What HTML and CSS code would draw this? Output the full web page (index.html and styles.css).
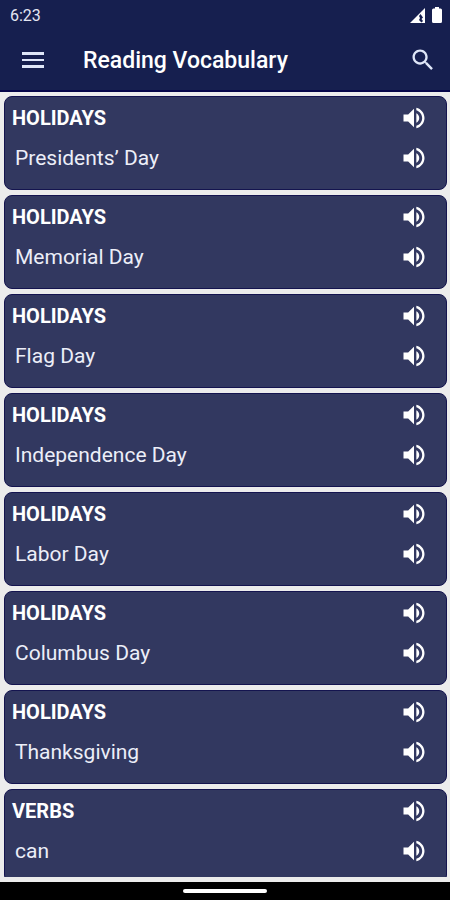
FILE: index.html
```html
<!DOCTYPE html>
<html lang="en">
<head>
    <meta charset="UTF-8">
    <meta name="viewport" content="width=device-width, initial-scale=1.0">
    <title>Reading Vocabulary</title>
    <link rel="stylesheet" href="styles.css">
</head>
<body>
    <!-- Shared icon shapes -->
    <svg class="icon-defs" aria-hidden="true">
        <symbol id="icon-volume" viewBox="0 0 24 24">
            <path d="M3 9v6h4l5 5V4L7 9H3zm13.5 3c0-1.77-1.02-3.29-2.5-4.03v8.05c1.48-.73 2.5-2.25 2.5-4.02zM14 3.23v2.06c2.89.86 5 3.54 5 6.71s-2.11 5.85-5 6.71v2.06c4.01-.91 7-4.49 7-8.77s-2.99-7.86-7-8.77z"/>
        </symbol>
    </svg>

    <div class="app">
        <header class="header">
            <div class="status-bar">
                <span class="clock">6:23</span>
                <div class="status-icons">
                    <svg class="signal" viewBox="0 0 15 15" aria-hidden="true">
                        <path d="M0 15L15 0v15z"/>
                        <path class="signal-mark" d="M10.500 6L13 9.500 11.500 11l1.500 2-1.500 1.500L9 12l1-2-1-2z"/>
                    </svg>
                    <svg class="battery" viewBox="0 0 10 16" aria-hidden="true">
                        <path d="M3 0h4v1.500h1.500Q10 1.500 10 3v11.500Q10 16 8.500 16h-7Q0 16 0 14.500V3Q0 1.500 1.500 1.500H3z"/>
                    </svg>
                </div>
            </div>
            <div class="toolbar">
                <button class="icon-button" type="button" aria-label="Menu">
                    <svg class="menu-icon" viewBox="0 0 22 16" aria-hidden="true">
                        <path d="M0 0h22v3H0zM0 7h22v2H0zM0 13h22v3H0z"/>
                    </svg>
                </button>
                <h1>Reading Vocabulary</h1>
                <button class="icon-button" type="button" aria-label="Search">
                    <svg class="search-icon" viewBox="0 0 24 24" aria-hidden="true">
                        <path d="M15.500 14h-.79l-.28-.27C15.410 12.590 16 11.110 16 9.500 16 5.910 13.090 3 9.500 3S3 5.910 3 9.500 5.910 16 9.500 16c1.610 0 3.090-.59 4.230-1.570l.27.28v.79l5 4.990L20.490 19l-4.990-5zm-6 0C7.010 14 5 11.990 5 9.500S7.010 5 9.500 5 14 7.010 14 9.500 11.990 14 9.500 14z"/>
                    </svg>
                </button>
            </div>
        </header>

        <main class="content">
            <ul class="word-list">
                <li class="word-card">
                    <div class="word-row">
                        <h2>HOLIDAYS</h2>
                        <button class="speak" type="button" aria-label="Play category"><svg><use href="#icon-volume"/></svg></button>
                    </div>
                    <div class="word-row">
                        <p>Presidents’ Day</p>
                        <button class="speak" type="button" aria-label="Play word"><svg><use href="#icon-volume"/></svg></button>
                    </div>
                </li>
                <li class="word-card">
                    <div class="word-row">
                        <h2>HOLIDAYS</h2>
                        <button class="speak" type="button" aria-label="Play category"><svg><use href="#icon-volume"/></svg></button>
                    </div>
                    <div class="word-row">
                        <p>Memorial Day</p>
                        <button class="speak" type="button" aria-label="Play word"><svg><use href="#icon-volume"/></svg></button>
                    </div>
                </li>
                <li class="word-card">
                    <div class="word-row">
                        <h2>HOLIDAYS</h2>
                        <button class="speak" type="button" aria-label="Play category"><svg><use href="#icon-volume"/></svg></button>
                    </div>
                    <div class="word-row">
                        <p>Flag Day</p>
                        <button class="speak" type="button" aria-label="Play word"><svg><use href="#icon-volume"/></svg></button>
                    </div>
                </li>
                <li class="word-card">
                    <div class="word-row">
                        <h2>HOLIDAYS</h2>
                        <button class="speak" type="button" aria-label="Play category"><svg><use href="#icon-volume"/></svg></button>
                    </div>
                    <div class="word-row">
                        <p>Independence Day</p>
                        <button class="speak" type="button" aria-label="Play word"><svg><use href="#icon-volume"/></svg></button>
                    </div>
                </li>
                <li class="word-card">
                    <div class="word-row">
                        <h2>HOLIDAYS</h2>
                        <button class="speak" type="button" aria-label="Play category"><svg><use href="#icon-volume"/></svg></button>
                    </div>
                    <div class="word-row">
                        <p>Labor Day</p>
                        <button class="speak" type="button" aria-label="Play word"><svg><use href="#icon-volume"/></svg></button>
                    </div>
                </li>
                <li class="word-card">
                    <div class="word-row">
                        <h2>HOLIDAYS</h2>
                        <button class="speak" type="button" aria-label="Play category"><svg><use href="#icon-volume"/></svg></button>
                    </div>
                    <div class="word-row">
                        <p>Columbus Day</p>
                        <button class="speak" type="button" aria-label="Play word"><svg><use href="#icon-volume"/></svg></button>
                    </div>
                </li>
                <li class="word-card">
                    <div class="word-row">
                        <h2>HOLIDAYS</h2>
                        <button class="speak" type="button" aria-label="Play category"><svg><use href="#icon-volume"/></svg></button>
                    </div>
                    <div class="word-row">
                        <p>Thanksgiving</p>
                        <button class="speak" type="button" aria-label="Play word"><svg><use href="#icon-volume"/></svg></button>
                    </div>
                </li>
                <li class="word-card">
                    <div class="word-row">
                        <h2>VERBS</h2>
                        <button class="speak" type="button" aria-label="Play category"><svg><use href="#icon-volume"/></svg></button>
                    </div>
                    <div class="word-row">
                        <p>can</p>
                        <button class="speak" type="button" aria-label="Play word"><svg><use href="#icon-volume"/></svg></button>
                    </div>
                </li>
            </ul>
        </main>

        <footer class="nav-bar">
            <div class="nav-handle"></div>
        </footer>
    </div>
</body>
</html>
```

FILE: styles.css
```css
* {
    margin: 0;
    padding: 0;
    box-sizing: border-box;
    font-family: Roboto, 'Liberation Sans', sans-serif;
}

body {
    background-color: #ececec;
    color: #fff;
}

button {
    display: flex;
    align-items: center;
    justify-content: center;
    border: none;
    background: none;
    color: inherit;
    cursor: pointer;
}

svg {
    display: block;
    fill: currentColor;
}

.icon-defs {
    display: none;
}

.app {
    display: flex;
    flex-direction: column;
    height: 100vh;
}

/* Header */
.header {
    background-color: #161f4f;
    border-bottom: 2px solid #06064a;
}

.status-bar {
    display: flex;
    align-items: center;
    justify-content: space-between;
    height: 30px;
    padding: 0 8px 0 10px;
}

.clock {
    font-size: 16px;
    color: #e4e6f2;
}

.status-icons {
    display: flex;
    align-items: center;
    gap: 7px;
}

.signal {
    width: 15px;
    height: 15px;
}

.signal-mark {
    fill: #161f4f;
}

.battery {
    width: 10px;
    height: 16px;
}

.toolbar {
    display: flex;
    align-items: center;
    height: 60px;
    padding: 0 7px 0 13px;
}

.toolbar h1 {
    flex: 1;
    padding: 2px 0 0 30px;
    font-size: 23px;
    font-weight: 500;
    line-height: 32px;
}

.icon-button {
    width: 40px;
    height: 40px;
    color: #dfe6f8;
}

.menu-icon {
    width: 22px;
    height: 16px;
}

.search-icon {
    width: 28px;
    height: 28px;
}

/* Word list */
.content {
    flex: 1;
    min-height: 0;
    padding: 4px 3px 5px 4px;
}

.word-list {
    display: flex;
    flex-direction: column;
    gap: 5px;
    height: 100%;
    overflow: hidden;
    list-style: none;
}

.word-card {
    flex-shrink: 0;
    padding: 1px 18px 11px 7px;
    background-color: #323860;
    border: 1px solid #14144f;
    border-radius: 8px;
}

.word-row {
    display: flex;
    align-items: center;
    justify-content: space-between;
    height: 40px;
}

.word-row h2 {
    font-size: 20px;
    font-weight: 700;
}

.word-row p {
    padding-left: 3px;
    font-size: 21px;
    color: #eceef8;
}

.speak svg {
    width: 28px;
    height: 28px;
}

/* System navigation */
.nav-bar {
    display: flex;
    align-items: center;
    justify-content: center;
    height: 18px;
    background-color: #000;
}

.nav-handle {
    width: 84px;
    height: 4px;
    border-radius: 2px;
    background-color: #fff;
}
```
